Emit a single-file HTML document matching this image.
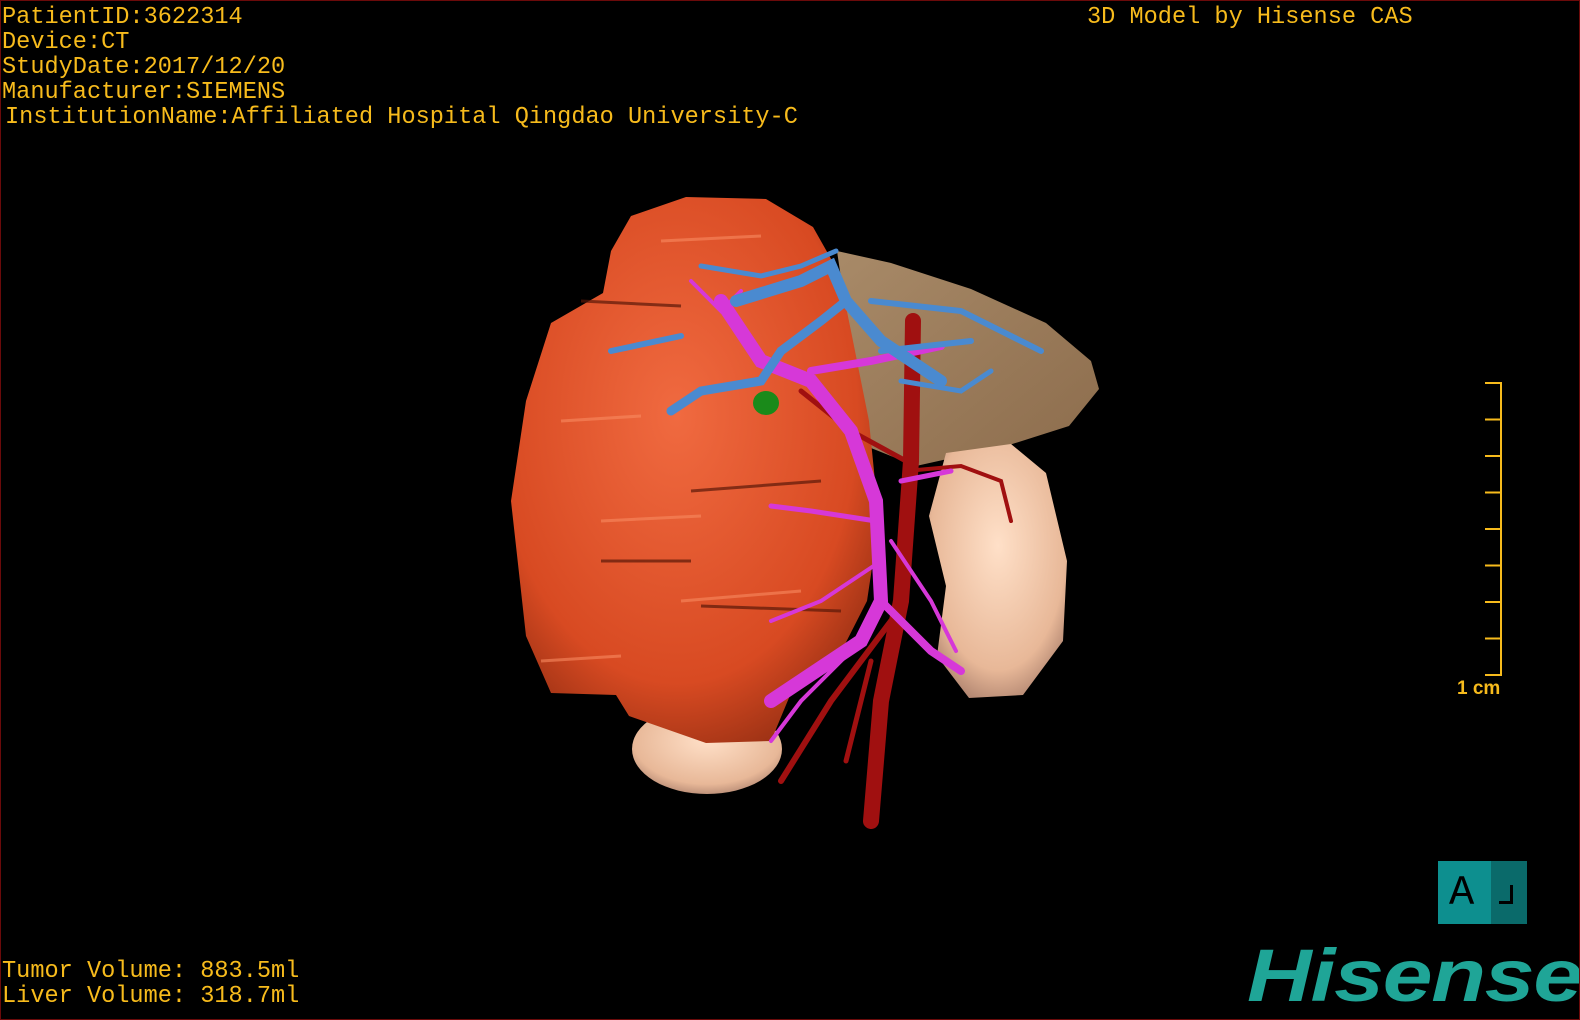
<!DOCTYPE html>
<html><head><meta charset="utf-8"><style>
html,body{margin:0;padding:0;background:#000;}
#s{position:relative;width:1580px;height:1020px;overflow:hidden;background:#000;box-sizing:border-box;border:1px solid #6b0a0a;}
.t{position:absolute;font-family:"Liberation Mono",monospace;font-size:23.6px;color:#f7bb1c;white-space:pre;line-height:25px;}
</style></head><body><div id="s">
<svg width="1580" height="1020" style="position:absolute;left:0;top:0">
<defs>
<radialGradient id="tg" cx="0.45" cy="0.4" r="0.7"><stop offset="0" stop-color="#f06a40"/><stop offset="0.7" stop-color="#d84a22"/><stop offset="1" stop-color="#8a2a10"/></radialGradient>
<radialGradient id="pg" cx="0.5" cy="0.4" r="0.7"><stop offset="0" stop-color="#ffe0c8"/><stop offset="0.7" stop-color="#e8b898"/><stop offset="1" stop-color="#9a7060"/></radialGradient>
<linearGradient id="lg" x1="0" y1="0" x2="1" y2="1"><stop offset="0" stop-color="#a88a68"/><stop offset="1" stop-color="#8c6c4c"/></linearGradient>
</defs>
<path d="M836,250 L890,262 L970,288 L1045,322 L1090,360 L1098,388 L1068,425 L1005,445 L915,465 L865,445 Z" fill="url(#lg)"/>
<path d="M945,452 L1010,443 L1045,472 L1066,560 L1062,640 L1022,694 L968,697 L936,655 L945,585 L928,515 Z" fill="url(#pg)"/>
<ellipse cx="706" cy="748" rx="75" ry="45" fill="url(#pg)"/>
<path d="M630,215 L685,196 L765,198 L812,226 L838,272 L850,330 L868,420 L878,520 L866,600 L838,655 L790,692 L770,740 L705,742 L628,715 L615,694 L550,692 L525,635 L510,500 L525,400 L550,322 L602,292 L610,250 Z" fill="url(#tg)"/>
<g stroke="#f88a60" stroke-width="3" fill="none" opacity="0.6">
<path d="M560,420 L640,415"/><path d="M600,520 L700,515"/><path d="M680,600 L800,590"/><path d="M540,660 L620,655"/><path d="M660,240 L760,235"/>
</g>
<g stroke="#5a1808" stroke-width="3" fill="none" opacity="0.7">
<path d="M690,490 L820,480"/><path d="M700,605 L840,610"/><path d="M580,300 L680,305"/><path d="M600,560 L690,560"/>
</g>
<g stroke="#a01010" fill="none" stroke-linecap="round">
<path d="M912,320 L910,460 L900,600 L880,700 L870,820" stroke-width="16"/>
<path d="M890,620 L830,700 L780,780" stroke-width="6"/>
<path d="M870,660 L845,760" stroke-width="5"/>
<path d="M905,470 L960,465 L1000,480 L1010,520" stroke-width="4"/>
<path d="M800,390 L850,430 L905,460" stroke-width="5"/>
</g>
<g stroke="#d638d8" fill="none" stroke-linecap="round">
<path d="M720,300 L760,360 L810,380 L850,430 L875,500 L880,600 L860,640 L800,680 L770,700" stroke-width="14"/>
<path d="M810,370 L870,360 L940,345" stroke-width="8"/>
<path d="M875,520 L810,510 L770,505" stroke-width="5"/>
<path d="M880,560 L820,600 L770,620" stroke-width="4"/>
<path d="M880,600 L930,650 L960,670" stroke-width="8"/>
<path d="M890,540 L930,600 L955,650" stroke-width="4"/>
<path d="M690,280 L720,310 L740,290" stroke-width="4"/>
<path d="M860,640 L800,700 L770,740" stroke-width="4"/>
<path d="M900,480 L950,470" stroke-width="5"/>
</g>
<g stroke="#4a8ad0" fill="none" stroke-linecap="round">
<path d="M700,265 L760,275 L800,265 L835,250" stroke-width="5"/>
<path d="M735,300 L800,280 L830,265 L845,300 L880,340 L940,380" stroke-width="12"/>
<path d="M845,300 L820,320 L780,350 L760,380 L700,390 L670,410" stroke-width="9"/>
<path d="M870,300 L960,310 L1040,350" stroke-width="6"/>
<path d="M880,350 L970,340" stroke-width="6"/>
<path d="M610,350 L680,335" stroke-width="6"/>
<path d="M900,380 L960,390 L990,370" stroke-width="5"/>
</g>
<ellipse cx="765" cy="402" rx="13" ry="12" fill="#1a8a1a"/>
<g stroke="#f7bb1c" stroke-width="2" fill="none">
<path d="M1484,382 L1500,382 L1500,674 L1484,674"/>
<path d="M1484,418.5 H1500 M1484,455 H1500 M1484,491.5 H1500 M1484,528 H1500 M1484,564.5 H1500 M1484,601 H1500 M1484,637.5 H1500"/>
</g>
</svg>
<div class="t" style="left:1px;top:4px">PatientID:3622314
Device:CT
StudyDate:2017/12/20
Manufacturer:SIEMENS</div>
<div class="t" style="left:4px;top:104px">InstitutionName:Affiliated Hospital Qingdao University-C</div>
<div class="t" style="left:1086px;top:4px">3D Model by Hisense CAS</div>
<div class="t" style="left:1456px;top:675px;font-family:'Liberation Sans',sans-serif;font-size:19px;font-weight:bold">1 cm</div>
<div class="t" style="left:1px;top:958px">Tumor Volume: 883.5ml
Liver Volume: 318.7ml</div>
<div style="position:absolute;left:1437px;top:860px;width:89px;height:63px;background:#0d8f8f">
<div style="position:absolute;left:53px;top:0;width:36px;height:63px;background:#0a6a6a"></div>
<div style="position:absolute;left:11px;top:8px;font:42px 'Liberation Mono',monospace;color:#000;line-height:48px">A</div>
<div style="position:absolute;left:61px;top:40px;width:14px;height:3px;background:#000"></div>
<div style="position:absolute;left:72px;top:24px;width:3px;height:19px;background:#000"></div>
</div>
<div style="position:absolute;left:1246px;top:930px;font:italic bold 74px 'Liberation Sans',sans-serif;color:#1fa597;transform:scaleX(1.21);transform-origin:0 0;line-height:90px;letter-spacing:-1px">Hisense</div>
</div></body></html>
